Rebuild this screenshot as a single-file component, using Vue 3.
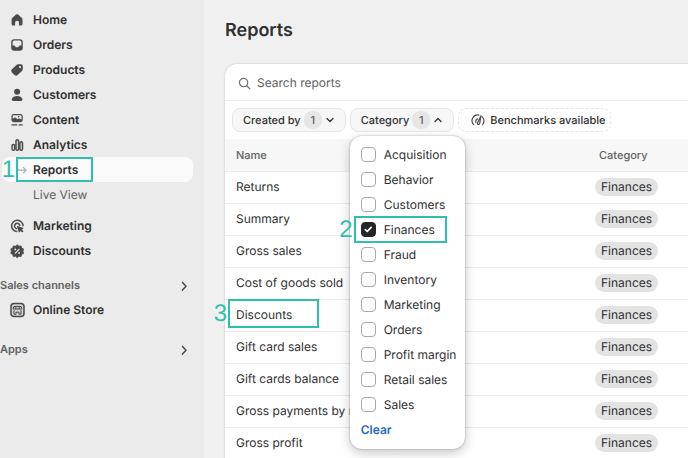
<script setup>
import { ref } from 'vue'

const mainNav = [
  { label: 'Home', icon: 'home' },
  { label: 'Orders', icon: 'orders' },
  { label: 'Products', icon: 'products' },
  { label: 'Customers', icon: 'customers' },
  { label: 'Content', icon: 'content' },
  { label: 'Analytics', icon: 'analytics' },
  { label: 'Reports', sub: true, active: true, step: 1 },
  { label: 'Live View', sub: true },
  { label: 'Marketing', icon: 'marketing', spaced: true },
  { label: 'Discounts', icon: 'discounts' },
]

const categories = [
  'Acquisition', 'Behavior', 'Customers', 'Finances', 'Fraud', 'Inventory',
  'Marketing', 'Orders', 'Profit margin', 'Retail sales', 'Sales',
]
const selected = ref(['Finances'])

const reports = [
  'Returns', 'Summary', 'Gross sales', 'Cost of goods sold', 'Discounts',
  'Gift card sales', 'Gift cards balance', 'Gross payments by method', 'Gross profit',
]
const query = ref('')
</script>

<template>
  <div class="app">
    <aside class="sidebar">
      <nav class="nav">
        <a
          v-for="item in mainNav"
          :key="item.label"
          href="#"
          class="item"
          :class="{ sub: item.sub, active: item.active, spaced: item.spaced }"
        >
          <span class="slot">
            <svg v-if="item.icon === 'home'" class="icon" viewBox="0 0 16 16">
              <path fill="currentColor" d="M7 2.600a1.600 1.600 0 0 1 2.100 0l3.800 3.300c.4.4.6.8.6 1.300v4.900a1.500 1.500 0 0 1-1.500 1.500h-1.300a.7.7 0 0 1-.7-.7V10.700a1.950 1.950 0 0 0-3.900 0v2.200a.7.7 0 0 1-.7.7H4.100a1.500 1.500 0 0 1-1.500-1.500V7.200c0-.5.2-.9.600-1.300z" />
            </svg>
            <svg v-else-if="item.icon === 'orders'" class="icon" viewBox="0 0 16 16">
              <path fill="currentColor" fill-rule="evenodd" d="M5.200 2.200h5.600a3 3 0 0 1 3 3v5.600a3 3 0 0 1-3 3H5.200a3 3 0 0 1-3-3V5.200a3 3 0 0 1 3-3zM5.300 3.600a1.700 1.700 0 0 0-1.700 1.700v3.200h1.500c.5 0 .8.200 1 .6l.3.600c.2.400.5.600 1 .6h1.200c.5 0 .8-.2 1-.6l.3-.6c.2-.4.500-.6 1-.6h1.500V5.300a1.700 1.700 0 0 0-1.700-1.700z" />
            </svg>
            <svg v-else-if="item.icon === 'products'" class="icon" viewBox="0 0 16 16">
              <path fill="currentColor" fill-rule="evenodd" d="M9.300 2.300h2.500a2 2 0 0 1 2 2v2.500c0 .8-.3 1.500-.9 2.100l-4.200 4.200a2.200 2.200 0 0 1-3.100 0L2.900 10.400a2.200 2.200 0 0 1 0-3.100l4.300-4.100c.6-.6 1.300-.9 2.100-.9zM11 6.200a1.100 1.100 0 1 0 0-2.200 1.100 1.100 0 0 0 0 2.200z" />
            </svg>
            <svg v-else-if="item.icon === 'customers'" class="icon" viewBox="0 0 16 16">
              <circle cx="8.100" cy="4.800" r="3" fill="currentColor" />
              <path fill="currentColor" d="M8.100 9c2.600 0 4.700 1.200 5.300 3.100.3.900-.4 1.800-1.400 1.800H4.200c-1 0-1.700-.9-1.400-1.800C3.400 10.200 5.500 9 8.100 9z" />
            </svg>
            <svg v-else-if="item.icon === 'content'" class="icon" viewBox="0 0 16 16">
              <path fill="currentColor" fill-rule="evenodd" d="M4.800 2h6.600a2.400 2.400 0 0 1 2.400 2.400v3.400a2.400 2.400 0 0 1-2.400 2.400H4.800a2.400 2.400 0 0 1-2.400-2.400V4.400A2.400 2.400 0 0 1 4.800 2zM4.700 3.300c-.6 0-1 .4-1 1v2.500l1.500-1.100c.5-.4 1-.4 1.500 0l1.900 1.500.9-.6c.4-.3.9-.3 1.300 0l1.700 1.200V4.300c0-.6-.4-1-1-1zM9.700 5.600a.8.8 0 1 0 0-1.600.8.800 0 0 0 0 1.600z" />
              <path stroke="currentColor" stroke-width="1.300" stroke-linecap="round" d="M3 12.900h4.800M10.200 12.900h3" />
            </svg>
            <svg v-else-if="item.icon === 'analytics'" class="icon" viewBox="0 0 16 16">
              <g fill="none" stroke="currentColor" stroke-width="1.500">
                <rect x="3.100" y="7.500" width="2.600" height="5.800" rx="1.300" />
                <rect x="7" y="2.700" width="2.600" height="10.600" rx="1.300" />
                <rect x="10.900" y="4.800" width="2.600" height="8.500" rx="1.300" />
              </g>
            </svg>
            <svg v-else-if="item.icon === 'marketing'" class="icon" viewBox="0 0 16 16">
              <g fill="none" stroke="currentColor" stroke-width="1.500" stroke-linecap="round">
                <path d="M14 7.800A5.700 5.700 0 1 0 7.600 13.600" />
                <path d="M10.800 7.200A2.700 2.700 0 1 0 7.400 10.600" />
              </g>
              <path fill="currentColor" d="M8.600 7.900l5.300 1.800c.6.200.6 1 .1 1.200l-1.300.6 1.500 1.500c.6.600-.6 1.800-1.200 1.200l-1.500-1.500-.6 1.400c-.2.500-1 .5-1.200-.1L7.900 8.600c-.1-.4.300-.8.700-.7z" />
            </svg>
            <svg v-else-if="item.icon === 'discounts'" class="icon" viewBox="0 0 16 16">
              <path fill="currentColor" d="M8.200 1.700l1.700 1.500 2.200-.3.600 2.200 2 1-.8 2.100.8 2.100-2 1-.6 2.200-2.200-.3-1.700 1.500-1.700-1.500-2.200.3-.6-2.200-2-1 .8-2.100-.8-2.100 2-1 .6-2.200 2.200.3z" stroke="currentColor" stroke-width=".8" stroke-linejoin="round" />
              <path stroke="#ebebeb" stroke-width="1.200" stroke-linecap="round" d="M6.300 10.100l3.800-3.800" />
              <circle cx="6.300" cy="6.400" r=".9" fill="#ebebeb" />
              <circle cx="10.100" cy="10" r=".9" fill="#ebebeb" />
            </svg>
            <svg v-else-if="item.active" class="branch" viewBox="0 0 18 16">
              <path fill="none" stroke="#b0b0b0" stroke-width="1.200" stroke-linecap="round" stroke-linejoin="round" d="M8.500-4v10.200a2 2 0 0 0 2 2H17M14.500 5.600l2.600 2.600-2.600 2.600" />
            </svg>
          </span>
          <span>{{ item.label }}</span>
          <span v-if="item.step" class="mark mark-nav"><b class="step">1</b></span>
        </a>
      </nav>

      <section class="group">
        <button type="button" class="group-head">
          <span>Sales channels</span>
          <svg class="chev" viewBox="0 0 12 12"><path d="M4.500 3.500L8 7.300l-3.500 3.800" /></svg>
        </button>
        <a href="#" class="item">
          <span class="slot">
            <svg class="icon" viewBox="0 0 16 16">
              <rect x="2" y="1.500" width="13" height="13" rx="3" fill="#d2d2d2" stroke="currentColor" stroke-width="1.500" />
              <path fill="none" stroke="currentColor" stroke-width="1" d="M4.800 4.500h7.400l.7 2.500H4.100zM5 8.300v3.900h2v-2h3v2h2V8.300M6.800 4.500v2.500M10.200 4.500v2.500" />
            </svg>
          </span>
          <span>Online Store</span>
        </a>
      </section>

      <section class="group apps">
        <button type="button" class="group-head">
          <span>Apps</span>
          <svg class="chev" viewBox="0 0 12 12"><path d="M4.500 3.500L8 7.300l-3.500 3.800" /></svg>
        </button>
      </section>
    </aside>

    <main class="main">
      <h1>Reports</h1>
      <div class="card">
        <label class="search">
          <svg class="lens" viewBox="0 0 14 14">
            <circle cx="6" cy="6" r="4.500" /><path d="M9.400 9.400l3.300 3.300" />
          </svg>
          <input v-model="query" type="search" placeholder="Search reports" aria-label="Search reports" />
        </label>

        <div class="filters">
          <button type="button" class="pill">
            <span>Created by</span><span class="count">1</span>
            <svg class="caret" viewBox="0 0 10 10"><path d="M2 3.500l3 3 3-3" /></svg>
          </button>
          <div class="drop">
            <button type="button" class="pill" aria-expanded="true">
              <span>Category</span><span class="count">{{ selected.length }}</span>
              <svg class="caret" viewBox="0 0 10 10"><path d="M2 6.500l3-3 3 3" /></svg>
            </button>
            <div class="menu">
              <label v-for="c in categories" :key="c" class="option">
                <input v-model="selected" type="checkbox" :value="c" />
                <span>{{ c }}</span>
                <span v-if="c === 'Finances'" class="mark mark-option"><b class="step">2</b></span>
              </label>
              <button type="button" class="clear" @click="selected = []">Clear</button>
            </div>
          </div>
          <button type="button" class="pill dashed">
            <svg class="gauge" viewBox="0 0 14 14">
              <path d="M2.600 11.600A5.700 5.700 0 0 1 7.800 2.100M11 3.600a5.700 5.700 0 0 1 .6 8M4.900 9.300A2.800 2.800 0 0 1 6.500 5.900" />
              <path d="M9.900 2.900L8.700 10.300a1.200 1.200 0 1 1-1.900-1z" />
            </svg>
            <span>Benchmarks available</span>
          </button>
        </div>

        <table>
          <thead>
            <tr><th scope="col">Name</th><th scope="col" class="cat">Category</th></tr>
          </thead>
          <tbody>
            <tr v-for="r in reports" :key="r">
              <td>
                <span class="name">{{ r }}<span v-if="r === 'Discounts'" class="mark mark-row"><b class="step">3</b></span></span>
              </td>
              <td class="cat"><span class="badge">Finances</span></td>
            </tr>
          </tbody>
        </table>
      </div>
    </main>
  </div>
</template>

<style>
body {
  margin: 0;
  background: #f0f0f0;
}
</style>

<style scoped>
* {
  box-sizing: border-box;
}
.app {
  display: flex;
  height: 100vh;
  overflow: hidden;
  font-family: Inter, "Liberation Sans", sans-serif;
  font-size: 12px;
  line-height: 16px;
  color: #303030;
  text-rendering: geometricPrecision;
}
button {
  font: inherit;
  color: inherit;
  border: 0;
  padding: 0;
  background: none;
  text-rendering: inherit;
}
.sidebar {
  flex: none;
  width: 204px;
  padding: 7px 11px 0 0;
  background: #ebebeb;
}
.nav {
  display: flex;
  flex-direction: column;
}
.item {
  position: relative;
  display: flex;
  align-items: center;
  gap: 8px;
  height: 25px;
  margin-left: 2px;
  padding-left: 7px;
  border-radius: 8px;
  color: #303030;
  font-weight: 600;
  text-decoration: none;
}
.item.sub {
  font-weight: 400;
  color: #616161;
}
.item.active {
  background: #fafafa;
  color: #303030;
  font-weight: 600;
}
.item.spaced {
  margin-top: 6px;
}
.slot {
  display: flex;
  width: 16px;
}
.icon {
  flex: none;
  width: 16px;
  height: 16px;
  color: #4a4a4a;
}
.branch {
  flex: none;
  width: 18px;
  height: 16px;
  overflow: visible;
}
.group {
  margin-top: 10px;
}
.apps {
  margin-top: 15px;
}
.group-head {
  display: flex;
  align-items: center;
  justify-content: space-between;
  width: 100%;
  height: 24px;
  padding-right: 3px;
  font-size: 11px;
  font-weight: 600;
  color: #616161;
}
.chev {
  width: 12px;
  height: 12px;
  fill: none;
  stroke: #4a4a4a;
  stroke-width: 1.500;
  stroke-linecap: round;
  stroke-linejoin: round;
}
.main {
  flex: 1;
  min-width: 0;
  padding: 19px 0 0 21px;
}
h1 {
  margin: 0 0 21px;
  font-size: 18px;
  line-height: 24px;
  font-weight: 600;
}
.card {
  background: #fff;
  border-radius: 12px 0 0 0;
  box-shadow: 0 0 2px rgba(0, 0, 0, 0.25);
}
.search {
  display: flex;
  align-items: center;
  gap: 6px;
  height: 37px;
  padding: 2px 0 0 13px;
  border-bottom: 1px solid #ebebeb;
}
.lens {
  width: 13px;
  height: 13px;
  fill: none;
  stroke: #707070;
  stroke-width: 1.300;
  stroke-linecap: round;
}
.search input {
  flex: 1;
  min-width: 0;
  border: 0;
  padding: 0;
  outline: none;
  background: none;
  font: inherit;
  color: #303030;
  text-rendering: inherit;
}
.search input::placeholder {
  color: #616161;
  opacity: 1;
}
.filters {
  display: flex;
  gap: 4px;
  padding: 7px;
}
.drop {
  position: relative;
}
.pill {
  display: flex;
  align-items: center;
  gap: 3px;
  height: 24px;
  padding: 0 10px;
  border: 1px solid #e6e6e6;
  border-radius: 8px;
  background: #f7f7f7;
  font-size: 11px;
  font-weight: 500;
  white-space: nowrap;
}
.pill.dashed {
  gap: 5px;
  padding: 0 5px 0 12px;
  border-style: dashed;
  background: #fff;
}
.count {
  width: 18px;
  height: 18px;
  border-radius: 8px;
  background: #e6e6e6;
  line-height: 18px;
  text-align: center;
  color: #616161;
}
.caret {
  width: 10px;
  height: 10px;
  fill: none;
  stroke: #303030;
  stroke-width: 1.300;
  stroke-linecap: round;
  stroke-linejoin: round;
}
.gauge {
  width: 14px;
  height: 14px;
  fill: none;
  stroke: #4a4a4a;
  stroke-width: 1.200;
  stroke-linecap: round;
  stroke-linejoin: round;
}
.menu {
  position: absolute;
  z-index: 2;
  top: 28px;
  left: 0;
  width: 115px;
  padding: 6px 11px;
  border-radius: 12px;
  background: #fff;
  box-shadow: 0 0 2px rgba(0, 0, 0, 0.35), 0 4px 12px rgba(0, 0, 0, 0.22);
}
.option {
  position: relative;
  display: flex;
  align-items: center;
  gap: 8px;
  height: 25px;
  white-space: nowrap;
}
.option input {
  appearance: none;
  display: grid;
  place-items: center;
  flex: none;
  width: 15px;
  height: 15px;
  margin: 0;
  border: 1px solid #a8a8a8;
  border-radius: 4px;
  background: #fff;
}
.option input:checked {
  border-color: #262626;
  background: #262626;
}
.option input:checked::after {
  content: "";
  width: 8px;
  height: 7px;
  background: #fff;
  clip-path: polygon(0 55%, 14% 38%, 38% 62%, 86% 4%, 100% 20%, 40% 94%);
}
.clear {
  height: 26px;
  font-weight: 600;
  color: #1f66c7;
}
table {
  width: 100%;
  border-collapse: collapse;
  table-layout: fixed;
}
th,
td {
  height: 32px;
  padding: 0 11px;
  border-bottom: 1px solid #ebebeb;
  text-align: left;
  white-space: nowrap;
}
th {
  background: #f7f7f7;
  font-size: 11px;
  font-weight: 500;
  color: #616161;
}
.cat {
  width: 101px;
}
th.cat {
  padding-left: 12px;
}
td.cat {
  padding-left: 8px;
}
.name {
  position: relative;
}
.badge {
  display: inline-block;
  height: 18px;
  padding: 0 6px;
  border-radius: 9px;
  background: #e3e3e3;
  line-height: 18px;
}
.mark {
  position: absolute;
  border: 2px solid #2fbfae;
  pointer-events: none;
}
.mark-nav {
  top: 0;
  left: 14px;
  width: 77px;
  height: 25px;
}
.mark-option {
  top: -1px;
  left: -7px;
  width: 93px;
  height: 27px;
}
.mark-row {
  top: -8px;
  left: -8px;
  width: 91px;
  height: 29px;
}
.step {
  position: absolute;
  top: 50%;
  right: 100%;
  margin: -12px 3px 0 0;
  font: 400 24px/24px "Liberation Sans", sans-serif;
  color: #2fbfae;
}
</style>
